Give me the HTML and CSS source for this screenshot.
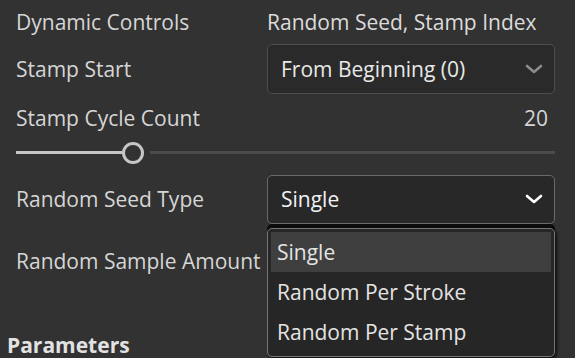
FILE: index.html
```html
<!DOCTYPE html>
<html lang="en">
<head>
  <meta charset="UTF-8" />
  <title>Dynamic Controls</title>
  <link rel="stylesheet" href="styles.css">
</head>
<body>
  <div class="panel">
    <div class="row">
      <div class="label">Dynamic Controls</div>
      <div class="value">Random Seed, Stamp Index</div>
    </div>

    <div class="row row-select">
      <div class="label">Stamp Start</div>
      <div class="select">
        <span>From Beginning (0)</span>
        <svg class="chevron" width="18" height="10" viewBox="0 0 18 10"><path d="M2 2 L9 8 L16 2" fill="none" stroke="currentColor" stroke-width="2.6" stroke-linecap="round" stroke-linejoin="round"/></svg>
      </div>
    </div>

    <div class="row row-count">
      <div class="label">Stamp Cycle Count</div>
      <div class="count">20</div>
    </div>

    <div class="slider">
      <div class="fill"></div>
      <div class="knob"></div>
      <div class="track"></div>
    </div>

    <div class="row row-select">
      <div class="label">Random Seed Type</div>
      <div class="select open">
        <span>Single</span>
        <svg class="chevron" width="18" height="10" viewBox="0 0 18 10"><path d="M2 2 L9 8 L16 2" fill="none" stroke="currentColor" stroke-width="2.6" stroke-linecap="round" stroke-linejoin="round"/></svg>
        <ul class="menu">
          <li class="selected">Single</li>
          <li>Random Per Stroke</li>
          <li>Random Per Stamp</li>
        </ul>
      </div>
    </div>

    <div class="row row-sample">
      <div class="label">Random Sample Amount</div>
    </div>

    <h3 class="section">Parameters</h3>
  </div>
</body>
</html>
```

FILE: styles.css
```css
* {
  box-sizing: border-box;
  margin: 0;
  padding: 0;
}

body {
  background: #323232;
  color: #d6d6d6;
  font-family: 'Open Sans', sans-serif;
  font-size: 21px;
  overflow: hidden;
}

.panel {
  padding: 0 20px 0 16px;
}

.row {
  display: grid;
  grid-template-columns: 251px 1fr;
  align-items: center;
  height: 44px;
}

.row-select {
  height: 50px;
}

.row-count {
  height: 48px;
}

.row-sample {
  height: 74px;
}

.label {
  white-space: nowrap;
}

.value {
  color: #dcdcdc;
  white-space: nowrap;
}

.count {
  text-align: right;
  padding-right: 7px;
}

.select {
  position: relative;
  height: 50px;
  display: flex;
  align-items: center;
  justify-content: space-between;
  padding: 0 11px 0 13px;
  background: #2a2a2a;
  border: 1px solid #4e4e4e;
  border-radius: 5px;
  color: #e8e8e8;
}

.select .chevron {
  color: #8c8c8c;
}

.select.open {
  height: 49px;
  background: #282828;
  border-color: #6a6a6a;
  color: #f2f2f2;
}

.select.open .chevron {
  color: #ffffff;
}

.menu {
  position: absolute;
  top: 52px;
  left: -1px;
  right: -1px;
  height: 129px;
  list-style: none;
  padding: 3px;
  background: #262626;
  border: 1px solid #777;
  border-radius: 5px;
  box-shadow: 0 -4px 0 #0b0b0b, 2px 2px 3px rgba(0, 0, 0, 0.7);
  z-index: 2;
}

.menu li {
  height: 40px;
  line-height: 40px;
  padding-left: 6px;
  color: #e4e4e4;
}

.menu li.selected {
  background: #3f3f3f;
}

.slider {
  display: flex;
  align-items: center;
  height: 21px;
  margin-bottom: 11px;
}

.fill {
  width: 106px;
  height: 3px;
  background: #c6c6c6;
}

.knob {
  width: 22px;
  height: 22px;
  border: 3px solid #c6c6c6;
  border-radius: 50%;
  flex-shrink: 0;
}

.track {
  flex: 1;
  height: 3px;
  margin-left: 6px;
  background: #4b4b4b;
}

.section {
  margin-left: -9px;
  margin-top: 33px;
  font-size: 21px;
  font-weight: 700;
  color: #e2e2e2;
}
```
